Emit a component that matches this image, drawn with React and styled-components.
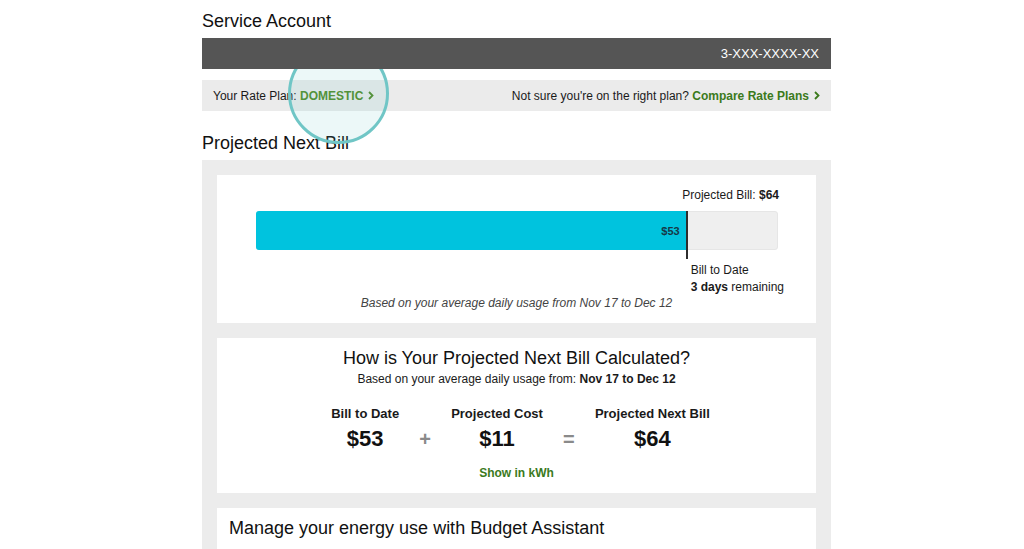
import React from "react";
import styled, { createGlobalStyle } from "styled-components";

const GlobalStyle = createGlobalStyle`
  html, body {
    margin: 0;
    padding: 0;
    background: #ffffff;
    font-family: "Liberation Sans", Arial, sans-serif;
    color: #1a1a1a;
  }
`;

const Page = styled.div`
  width: 629px;
  margin-left: 202px;
`;

const SectionTitle = styled.h2`
  margin: 0;
  padding-top: ${(p) => p.$top || 0}px;
  margin-bottom: ${(p) => p.$bottom || 0}px;
  font-size: 18px;
  line-height: 22px;
  font-weight: 400;
  color: #111;
`;

const AccountBar = styled.div`
  position: relative;
  z-index: 3;
  height: 31px;
  background: #555555;
  color: #fff;
  font-size: 13px;
  display: flex;
  align-items: center;
  justify-content: flex-end;
  padding: 0 12px;
`;

const PlanArea = styled.div`
  position: relative;
`;

const Highlight = styled.div`
  position: absolute;
  z-index: 2;
  left: 86px;
  top: -37px;
  width: 95px;
  height: 95px;
  border-radius: 50%;
  border: 3px solid #70c6c6;
  background: rgba(112, 198, 198, 0.13);
  pointer-events: none;
`;

const PlanBar = styled.div`
  margin-top: 11px;
  height: 31px;
  background: #ebebeb;
  display: flex;
  align-items: center;
  justify-content: space-between;
  padding: 0 11px;
  font-size: 12px;
  color: #1a1a1a;
`;

const Link = styled.span`
  color: ${(p) => (p.$light ? "#4f8a26" : "#3b7a1c")};
  font-weight: 700;
  display: inline-flex;
  align-items: center;
  gap: 5px;
`;

const Chevron = () => (
  <svg width="6" height="9" viewBox="0 0 6 9">
    <path d="M1 1 L4.5 4.5 L1 8" fill="none" stroke="currentColor" strokeWidth="1.8" />
  </svg>
);

const Panel = styled.div`
  background: #ececec;
  padding: 15px 15px 0;
  display: flex;
  flex-direction: column;
  gap: 15px;
`;

const Card = styled.div`
  background: #fff;
  padding: ${(p) => p.$pad};
`;

const ProjectedLine = styled.div`
  text-align: right;
  font-size: 12px;
  line-height: 15px;
  padding-right: 37px;
`;

const BarWrap = styled.div`
  position: relative;
  margin: 8px 38px 0 39px;
  height: 39px;
  background: #efefef;
  border: 1px solid #e6e6e6;
  box-sizing: border-box;
  border-radius: 3px;
`;

const BarFill = styled.div`
  position: absolute;
  left: -1px;
  top: -1px;
  bottom: -1px;
  background: #00c3de;
  border-radius: 3px 0 0 3px;
  display: flex;
  align-items: center;
  justify-content: flex-end;
  padding-right: 8px;
  box-sizing: border-box;
  font-size: 11px;
  font-weight: 700;
  color: #163847;
`;

const Marker = styled.div`
  position: absolute;
  top: -1px;
  width: 2px;
  height: 48px;
  background: #2d2d2d;
`;

const MarkerLabel = styled.div`
  position: absolute;
  top: 50px;
  margin-left: 5px;
  font-size: 12px;
  line-height: 17px;
  white-space: nowrap;
`;

const Caption = styled.div`
  margin-top: 46px;
  text-align: center;
  font-size: 12px;
  line-height: 15px;
  font-style: italic;
  color: #444;
`;

const CalcTitle = styled.div`
  text-align: center;
  font-size: 18px;
  line-height: 22px;
  color: #111;
`;

const CalcSub = styled.div`
  margin-top: 3px;
  text-align: center;
  font-size: 12px;
  line-height: 15px;
`;

const Equation = styled.div`
  margin-top: 19px;
  display: flex;
  justify-content: center;
  gap: 20px;
  padding-left: 8px;
`;

const Term = styled.div`
  display: flex;
  flex-direction: column;
  align-items: center;
`;

const TermLabel = styled.div`
  font-size: 13px;
  line-height: 16px;
  font-weight: 700;
`;

const TermValue = styled.div`
  margin-top: 4px;
  font-size: 22px;
  line-height: 26px;
  font-weight: 700;
  color: #111;
`;

const Operator = styled.div`
  align-self: flex-end;
  width: 12px;
  text-align: center;
  font-size: 20px;
  line-height: 26px;
  font-weight: 700;
  color: #8a8a8a;
`;

const KwhLink = styled.div`
  margin-top: 14px;
  text-align: center;
  font-size: 12px;
  line-height: 15px;
  font-weight: 700;
  color: #3b7a1c;
`;

const data = { toDate: 53, projectedCost: 11, projected: 64 };

export default function App() {
  const pct = (data.toDate / data.projected) * 100;
  return (
    <>
      <GlobalStyle />
      <Page>
        <SectionTitle $top={10} $bottom={6}>Service Account</SectionTitle>
        <AccountBar>3-XXX-XXXX-XX</AccountBar>
        <PlanArea>
          <Highlight />
          <PlanBar>
            <span>
              Your Rate Plan:{" "}
              <Link $light>
                DOMESTIC <Chevron />
              </Link>
            </span>
            <span>
              Not sure you're on the right plan?{" "}
              <Link>
                Compare Rate Plans <Chevron />
              </Link>
            </span>
          </PlanBar>
          <SectionTitle $top={21} $bottom={6}>Projected Next Bill</SectionTitle>
        </PlanArea>
        <Panel>
          <Card $pad="13px 0 12px">
            <ProjectedLine>
              Projected Bill: <b>${data.projected}</b>
            </ProjectedLine>
            <BarWrap>
              <BarFill style={{ width: `calc(${pct}% + 1px)` }}>${data.toDate}</BarFill>
              <Marker style={{ left: `calc(${pct}% - 2px)` }} />
              <MarkerLabel style={{ left: `calc(${pct}% - 2px)` }}>
                Bill to Date
                <br />
                <b>3 days</b> remaining
              </MarkerLabel>
            </BarWrap>
            <Caption>Based on your average daily usage from Nov 17 to Dec 12</Caption>
          </Card>
          <Card $pad="9px 0 12px">
            <CalcTitle>How is Your Projected Next Bill Calculated?</CalcTitle>
            <CalcSub>
              Based on your average daily usage from: <b>Nov 17 to Dec 12</b>
            </CalcSub>
            <Equation>
              <Term>
                <TermLabel>Bill to Date</TermLabel>
                <TermValue>${data.toDate}</TermValue>
              </Term>
              <Operator>+</Operator>
              <Term>
                <TermLabel>Projected Cost</TermLabel>
                <TermValue>${data.projectedCost}</TermValue>
              </Term>
              <Operator>=</Operator>
              <Term>
                <TermLabel>Projected Next Bill</TermLabel>
                <TermValue>${data.projected}</TermValue>
              </Term>
            </Equation>
            <KwhLink>Show in kWh</KwhLink>
          </Card>
          <Card $pad="9px 12px 40px">
            <SectionTitle>Manage your energy use with Budget Assistant</SectionTitle>
          </Card>
        </Panel>
      </Page>
    </>
  );
}
